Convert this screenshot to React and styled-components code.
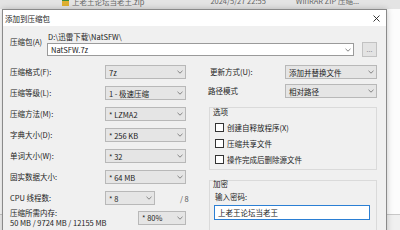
import React from 'react'
import styled, { createGlobalStyle } from 'styled-components'

const GlobalStyle = createGlobalStyle`
  html, body {
    margin: 0;
    padding: 0;
  }
  body {
    width: 400px;
    height: 230px;
    overflow: hidden;
    background: #fbfbfb;
    font-family: 'Noto Sans CJK SC', 'Noto Sans', sans-serif;
    font-size: 7.5px;
    color: #222;
  }
`

const Screen = styled.div`
  position: relative;
  width: 400px;
  height: 230px;
  overflow: hidden;
`

/* file manager behind the dialog */
const Backdrop = styled.div`
  display: flex;
  flex-direction: column;
  height: 100%;
`

const FileRow = styled.div`
  height: 9px;
  background: #e4e4e4;
  display: flex;
  align-items: flex-start;
  overflow: hidden;
  color: #666;
  line-height: 8px;
  white-space: nowrap;
`

const FileCell = styled.span`
  display: flex;
  align-items: center;
  gap: 3px;
  margin: -3px 0 0 ${p => p.$left}px;
`

const ZipIcon = styled.span`
  width: 7px;
  height: 9px;
  background: linear-gradient(#3c8d3c 0 45%, #e0b030 45% 100%);
`

const Pane = styled.div`
  flex: 1;
  background: #fcfcfc;
  display: flex;
  flex-direction: column;
  justify-content: flex-end;
`

const StatusStrip = styled.div`
  height: 15px;
  background: #f0f0f0;
  border-top: 1px solid #c8c8c8;
`

/* dialog window */
const Dialog = styled.div`
  position: absolute;
  left: 2px;
  top: 9px;
  width: 385px;
  height: 240px;
  box-sizing: border-box;
  border: 1px solid #8a8a8a;
  background: #f0f0f0;
  box-shadow: 0 0 6px rgba(0, 0, 0, 0.22);
`

const TitleBar = styled.div`
  height: 16px;
  background: #ffffff;
  display: flex;
  align-items: center;
  justify-content: space-between;
  padding: 0 6px 0 2px;
`

const Title = styled.span`
  color: #222;
`

const Body = styled.div`
  padding: 6px 9px 0 7px;
`

const ArchiveRow = styled.div`
  display: grid;
  grid-template-columns: 37px 1fr;
`

const ArchiveLabel = styled.span`
  line-height: 10px;
  margin-top: 5px;
`

const PathText = styled.div`
  line-height: 10px;
  padding-left: 1px;
`

const InputLine = styled.div`
  display: flex;
  align-items: center;
  gap: 8px;
`

const Combo = styled.div`
  box-sizing: border-box;
  height: ${p => p.$h || 14}px;
  width: ${p => (p.$w ? `${p.$w}px` : 'auto')};
  flex: ${p => (p.$w ? 'none' : 1)};
  display: flex;
  align-items: center;
  justify-content: space-between;
  padding: 0 2px 0 3px;
  background: ${p => (p.$edit ? '#ffffff' : '#e5e5e5')};
  border: 1px solid ${p => (p.$edit ? '#9a9a9a' : '#b8b8b8')};
  white-space: nowrap;
`

const BrowseButton = styled.div`
  box-sizing: border-box;
  width: 15px;
  height: 15px;
  background: #e3e3e3;
  border: 1px solid #c2c2c2;
  color: #8a8a8a;
  font-size: 7px;
  display: flex;
  align-items: center;
  justify-content: center;
  line-height: 1;
`

const Columns = styled.div`
  display: flex;
  gap: 22px;
  margin-top: 8px;
`

const LeftCol = styled.div`
  width: 176px;
  display: grid;
  grid-template-columns: 95px 81px;
  grid-auto-rows: 14px;
  row-gap: 7px;
  align-items: center;
`

const Label = styled.span`
  line-height: 10px;
  white-space: nowrap;
  padding-left: ${p => p.$indent || 0}px;
`

const Cell = styled.div`
  display: flex;
  align-items: center;
  gap: 25px;
  white-space: nowrap;
`

const Muted = styled.span`
  color: #555;
`

const MemoryRow = styled.div`
  grid-column: 1 / -1;
  display: grid;
  grid-template-columns: 128px 48px;
  align-items: start;
`

const MemoryText = styled.div`
  margin-top: -3px;
  display: flex;
  flex-direction: column;
  white-space: nowrap;
`

const MemoryLine = styled.span`
  line-height: 10px;
  height: 10px;
`

const RightCol = styled.div`
  width: 169px;
  display: flex;
  flex-direction: column;
`

const SettingsGrid = styled.div`
  display: grid;
  grid-template-columns: 77px 92px;
  grid-auto-rows: 14px;
  row-gap: 5px;
  align-items: center;
`

const Group = styled.div`
  box-sizing: border-box;
  margin: ${p => p.$top}px 0 0 1px;
  height: ${p => p.$h}px;
  border: 1px solid #dadada;
  border-bottom: ${p => (p.$open ? 'none' : '1px solid #dadada')};
`

const Legend = styled.div`
  line-height: 8px;
  padding-left: 3px;
  margin-top: ${p => p.$shift || 0}px;
`

const CheckList = styled.div`
  margin-top: 3px;
  display: flex;
  flex-direction: column;
`

const CheckRow = styled.label`
  height: 16px;
  display: flex;
  align-items: center;
  padding-left: 5px;
  gap: 3px;
`

const Box = styled.span`
  box-sizing: border-box;
  width: 9px;
  height: 9px;
  background: #fff;
  border: 1px solid #333;
`

const PwdLabel = styled.div`
  line-height: 8px;
  margin: 5px 0 0 5px;
`

const PwdInput = styled.div`
  box-sizing: border-box;
  margin: 4px 0 0 4px;
  width: 156px;
  height: 15px;
  border: 1px solid #2b7fd4;
  background: #fff;
  display: flex;
  align-items: center;
  padding-left: 3px;
`

const Chevron = () => (
  <svg width="6" height="4" viewBox="0 0 6 4">
    <path d="M0.5 0.8 L3 3.2 L5.5 0.8" fill="none" stroke="#777" strokeWidth="0.9" />
  </svg>
)

const Close = () => (
  <svg width="7" height="7" viewBox="0 0 7 7">
    <path d="M0.5 0.5 L6.5 6.5 M6.5 0.5 L0.5 6.5" stroke="#222" strokeWidth="0.9" />
  </svg>
)

const Select = ({ value, w, h, edit }) => (
  <Combo $w={w} $h={h} $edit={edit}>
    <span>{value}</span>
    <Chevron />
  </Combo>
)

const leftRows = [
  ['压缩格式(F):', '7z'],
  ['压缩等级(L):', '1 - 极速压缩'],
  ['压缩方法(M):', '* LZMA2'],
  ['字典大小(D):', '* 256 KB'],
  ['单词大小(W):', '* 32'],
  ['固实数据大小:', '* 64 MB'],
]

const options = ['创建自释放程序(X)', '压缩共享文件', '操作完成后删除源文件']

export default function App() {
  return (
    <Screen>
      <GlobalStyle />
      <Backdrop>
        <FileRow>
          <FileCell $left={62}>
            <ZipIcon />
            上老王论坛当老王.zip
          </FileCell>
          <FileCell $left={66}>2024/5/27 22:55</FileCell>
          <FileCell $left={30}>WinRAR ZIP 压缩...</FileCell>
        </FileRow>
        <Pane>
          <StatusStrip />
        </Pane>
      </Backdrop>

      <Dialog>
        <TitleBar>
          <Title>添加到压缩包</Title>
          <Close />
        </TitleBar>
        <Body>
          <ArchiveRow>
            <ArchiveLabel>压缩包(A)</ArchiveLabel>
            <div>
              <PathText>D:\迅雷下载\NatSFW\</PathText>
              <InputLine>
                <Select value="NatSFW.7z" h={13} edit />
                <BrowseButton>...</BrowseButton>
              </InputLine>
            </div>
          </ArchiveRow>

          <Columns>
            <LeftCol>
              {leftRows.map(([label, value]) => (
                <React.Fragment key={label}>
                  <Label>{label}</Label>
                  <Select value={value} />
                </React.Fragment>
              ))}
              <Label>CPU 线程数:</Label>
              <Cell>
                <Select value="* 8" w={50} />
                <Muted>/ 8</Muted>
              </Cell>
              <MemoryRow>
                <MemoryText>
                  <MemoryLine>压缩所需内存:</MemoryLine>
                  <MemoryLine>50 MB / 9724 MB / 12155 MB</MemoryLine>
                </MemoryText>
                <Select value="* 80%" />
              </MemoryRow>
            </LeftCol>

            <RightCol>
              <SettingsGrid>
                <Label $indent={2}>更新方式(U):</Label>
                <Select value="添加并替换文件" />
                <Label>路径模式</Label>
                <Select value="相对路径" />
              </SettingsGrid>

              <Group $top={9} $h={63}>
                <Legend>选项</Legend>
                <CheckList>
                  {options.map(o => (
                    <CheckRow key={o}>
                      <Box />
                      {o}
                    </CheckRow>
                  ))}
                </CheckList>
              </Group>

              <Group $top={10} $h={60} $open>
                <Legend $shift={-1}>加密</Legend>
                <PwdLabel>输入密码:</PwdLabel>
                <PwdInput>上老王论坛当老王</PwdInput>
              </Group>
            </RightCol>
          </Columns>
        </Body>
      </Dialog>
    </Screen>
  )
}
